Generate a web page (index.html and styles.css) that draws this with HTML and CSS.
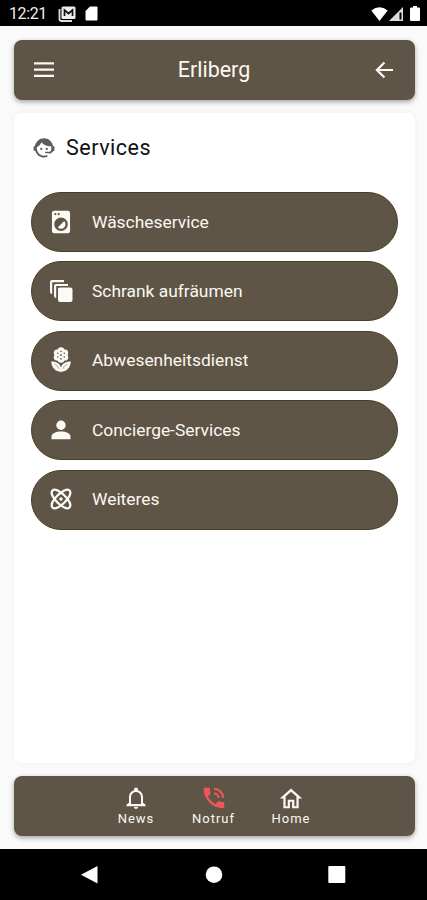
FILE: index.html
```html
<!DOCTYPE html>
<html lang="de">
<head>
<meta charset="utf-8">
<title>Erliberg</title>
<link rel="stylesheet" href="styles.css">
</head>
<body>
<div class="status">
  <span class="clock">12:21</span>
  <svg class="st-mail" viewBox="0 0 18 16"><path d="M1.500 3v10q0 2 2 2H14" fill="none" stroke="#ddd" stroke-width="1.800"/><rect x="3.500" y="0.500" width="14" height="12.500" rx="1.500" fill="#eee"/><path d="M6.500 10V4l4 3.500 4-3.500v6" fill="none" stroke="#111" stroke-width="1.700"/></svg>
  <svg class="st-sd" viewBox="0 0 13 15"><path d="M5 .5h6.500q1 0 1 1v12q0 1-1 1h-10q-1 0-1-1V5z" fill="#fff"/></svg>
  <svg class="st-wifi" viewBox="0 0 17 14"><path d="M.3 3.500Q8.500-3 16.700 3.500L8.500 14z" fill="#fff"/></svg>
  <svg class="st-cell" viewBox="0 0 14 14"><path d="M14 0v14H0z" fill="#ddd"/><path d="M10.500 5.500h2v7h-2z" fill="#000"/></svg>
  <svg class="st-batt" viewBox="0 0 10 15"><path d="M3 0h4v1.500h2q1 0 1 1V14q0 1-1 1H1q-1 0-1-1V2.500q0-1 1-1h2z" fill="#fff"/></svg>
</div>
<main class="app">
  <header class="bar top">
    <svg class="ico menu" viewBox="0 0 24 24"><path d="M2 4.300h20v2.300H2zM2 10.500h20v2.300H2zM2 16.700h20V19H2z"/></svg>
    <h1>Erliberg</h1>
    <svg class="ico back" viewBox="0 0 24 24"><path d="M21 10.900v2.200H7.500l5.700 5.700-1.500 1.500L3.300 12l8.400-8.300 1.500 1.500-5.700 5.700z"/></svg>
  </header>
  <section class="card">
    <h2><svg class="ico face" viewBox="0 0 24 24"><path d="M18.900 14.700C19.200 13.910 19.400 13 19.400 12C19.400 11.280 19.250 10.590 18.960 9.950C18.310 10.100 17.630 10.180 16.920 10.180C13.860 10.180 11.150 8.670 9.500 6.340C8.610 8.500 6.910 10.260 4.770 11.220C4.600 15.800 7.800 19.700 12 19.700C13.050 19.700 14.060 19.400 14.970 19L15.780 20.500C14.140 21.200 12.870 21.500 12 21.500C8 21.500 4.500 18.700 3.330 14.730H1.600V10.180H2.900C3.800 5.600 7.500 2.200 12 2.200C16.600 2.200 20.300 5.700 21.100 10.180H22.400V14.730H21.940L18.600 17.600L13.080 17.100V15.730H18z"/><circle cx="9.270" cy="12.900" r="1.140"/><circle cx="14.720" cy="12.900" r="1.140"/></svg><span>Services</span></h2>
    <nav class="list">
      <a class="item"><svg class="ico wash" viewBox="0 0 24 24"><path d="M14.830 11.170C16.390 12.730 16.390 15.270 14.830 16.830C13.270 18.390 10.730 18.390 9.170 16.830L14.830 11.170M6 2H18A2 2 0 0 1 20 4V20A2 2 0 0 1 18 22H6A2 2 0 0 1 4 20V4A2 2 0 0 1 6 2M7 4A1 1 0 0 0 6 5A1 1 0 0 0 7 6A1 1 0 0 0 8 5A1 1 0 0 0 7 4M10 4A1 1 0 0 0 9 5A1 1 0 0 0 10 6A1 1 0 0 0 11 5A1 1 0 0 0 10 4M12 8A6 6 0 0 0 6 14A6 6 0 0 0 12 20A6 6 0 0 0 18 14A6 6 0 0 0 12 8z"/></svg><span>Wäscheservice</span></a>
      <a class="item"><svg class="ico" viewBox="0 0 24 24"><path d="M11.500 8.500h10a2 2 0 0 1 2 2v10.500a2 2 0 0 1-2 2H11a2 2 0 0 1-2-2V11a2 2 0 0 1 2.500-2.500M7 19a2 2 0 0 1-2-2V7a2 2 0 0 1 2-2h12v2H7.200v12M3 15a2 2 0 0 1-2-2V3a2 2 0 0 1 2-2h12v2.200H3.200v12z"/></svg><span>Schrank aufräumen</span></a>
      <a class="item"><svg class="ico flower" viewBox="0 0 24 26"><circle cx="12" cy="4" r="3.500"/><circle cx="15.800" cy="5.900" r="3.300"/><circle cx="15.800" cy="10.300" r="3.300"/><circle cx="12" cy="12.300" r="3.500"/><circle cx="8.200" cy="10.300" r="3.300"/><circle cx="8.200" cy="5.900" r="3.300"/><g class="cut"><circle cx="12" cy="4.600" r=".8"/><circle cx="15.200" cy="6.400" r=".8"/><circle cx="15.200" cy="10" r=".8"/><circle cx="12" cy="11.900" r=".8"/><circle cx="8.800" cy="10" r=".8"/><circle cx="8.800" cy="6.400" r=".8"/></g><path class="leaf" d="M12 25C6.500 25 2 20.500 2 14C7.500 14 11.200 16.500 12 19.500C12.800 16.500 16.500 14 22 14C22 20.500 17.500 25 12 25z"/><path class="vein" d="M5.500 17q3.500 1.200 4.800 4.800M18.500 17q-3.500 1.200-4.800 4.800"/></svg><span>Abwesenheitsdienst</span></a>
      <a class="item"><svg class="ico" viewBox="0 0 24 24"><circle cx="12" cy="7.300" r="4.700"/><path d="M12 13.500c5.300 0 9.500 2.100 9.500 4.900v2.900h-19v-2.900c0-2.800 4.200-4.900 9.500-4.900z"/></svg><span>Concierge-Services</span></a>
      <a class="item"><svg class="ico" viewBox="0 0 24 24"><g class="orbit"><path d="M3.500 3.500C5.800 1.200 11 4 15.500 8.500S22.800 18.200 20.500 20.500 13 20 8.500 15.500 1.200 5.800 3.500 3.500z"/><path d="M20.500 3.500C18.200 1.200 13 4 8.500 8.500S1.200 18.200 3.500 20.500 11 20 15.500 15.500 22.800 5.800 20.500 3.500z"/></g><circle cx="12" cy="12" r="1.700"/></svg><span>Weiteres</span></a>
    </nav>
  </section>
  <footer class="bar tabs">
    <a class="tab"><svg class="ico" viewBox="0 0 24 24"><path d="M10 21h4c0 1.100-.9 2-2 2s-2-.9-2-2m11.500-2.300v1.600h-19v-1.600l2.500-2v-5.700c0-3.100 2.030-5.830 5-6.710V3.500a2 2 0 0 1 4 0v.79c2.970.88 5 3.610 5 6.710v5.700l2.500 2M17 11a5 5 0 0 0-10 0v7h10v-7z"/></svg><span>News</span></a>
    <a class="tab"><svg class="ico red" viewBox="1.500 1.500 21 21"><path d="M20 15.500c-1.250 0-2.450-.2-3.570-.57-.35-.11-.74-.03-1.020.24l-2.200 2.200a15.100 15.100 0 0 1-6.590-6.590l2.200-2.200c.28-.28.36-.67.250-1.020A11.360 11.360 0 0 1 8.500 4a1 1 0 0 0-1-1H4a1 1 0 0 0-1 1c0 9.390 7.610 17 17 17a1 1 0 0 0 1-1v-3.500a1 1 0 0 0-1-1M19 12h2a9 9 0 0 0-9-9v2a7 7 0 0 1 7 7m-4 0h2a5 5 0 0 0-5-5v2a3 3 0 0 1 3 3z"/></svg><span>Notruf</span></a>
    <a class="tab"><svg class="ico" viewBox="1 0.500 22 22"><path d="M12 5.690l5 4.500V19h-2v-6H9v6H7v-8.810l5-4.500M12 2.700L1.800 12H5v9h6v-6h2v6h6v-9h3.200L12 2.700z"/></svg><span>Home</span></a>
  </footer>
</main>
<div class="sysnav">
  <svg viewBox="0 0 20 20"><path d="M1 9.700L17.500 1v17.500z"/></svg>
  <svg viewBox="0 0 20 20"><circle cx="10" cy="9.700" r="8.300"/></svg>
  <svg viewBox="0 0 20 20"><rect x="1.300" y="1" width="17" height="17" rx="1"/></svg>
</div>
</body>
</html>
```
FILE: styles.css
```css
* { box-sizing: border-box; }
body {
  margin: 0;
  width: 427px;
  height: 900px;
  display: flex;
  flex-direction: column;
  background: #fafafa;
  font-family: Roboto, "Liberation Sans", sans-serif;
  overflow: hidden;
}
svg { display: block; flex: none; }
.status {
  height: 26px;
  background: #000;
  color: #eee;
  display: flex;
  align-items: center;
  padding: 1px 7px 0 9px;
}
.clock { font-size: 16px; width: 49px; letter-spacing: -0.4px; }
.st-mail { width: 18px; height: 16px; }
.st-sd { width: 13px; height: 15px; margin-left: 9px; }
.st-wifi { width: 17px; height: 14px; margin-left: auto; }
.st-cell { width: 14px; height: 14px; margin-left: 1px; }
.st-batt { width: 10px; height: 15px; margin-left: 7px; }
.app {
  height: 823px;
  padding: 14px 12px 13px 14px;
  display: flex;
  flex-direction: column;
}
.bar {
  height: 60px;
  flex: none;
  border-radius: 8px;
  background: #5f5546;
  color: #fbf8f2;
  display: flex;
  align-items: center;
  box-shadow: 0 2px 5px rgba(0, 0, 0, 0.35);
}
.ico { width: 24px; height: 24px; fill: #fcfaf5; }
.top { justify-content: space-between; padding: 0 19px 1px 18px; }
h1 { margin: 0; font-size: 21.5px; font-weight: 400; }
.card {
  flex: 1;
  margin: 13px 0;
  padding: 22px 17px;
  border-radius: 8px;
  background: #fff;
  box-shadow: 0 0 6px rgba(0, 0, 0, 0.05);
}
h2 {
  margin: 0 0 32px;
  height: 25px;
  display: flex;
  align-items: center;
  gap: 10px;
  padding-left: 1px;
  font-size: 21.5px;
  font-weight: 400;
  letter-spacing: 0.5px;
  color: #111;
}
.face { fill: #5c5c5c; }
.list { display: grid; gap: 9.400px; }
.item {
  height: 60px;
  border-radius: 30px;
  border: 1px solid #4a3e20;
  background: #5f5546;
  color: #fbf8f2;
  display: flex;
  align-items: center;
  gap: 19px;
  padding: 0 0 1px 17px;
  font-size: 17.4px;
}
.wash { transform: scale(1.13); }
.flower { transform: scale(1.1); }
.cut { fill: #5f5546; }
.leaf { stroke: #5f5546; stroke-width: 0.8; }
.vein { fill: none; stroke: #a59e92; stroke-width: 0.8; }
.orbit { fill: none; stroke: #fcfaf5; stroke-width: 2.3; }
.tabs { justify-content: center; padding: 0 2px 0 0; }
.tab {
  width: 77.500px;
  display: flex;
  flex-direction: column;
  align-items: center;
  font-size: 13px;
  line-height: 17px;
  letter-spacing: 1px;
}
.sysnav {
  height: 51px;
  background: #000;
  display: flex;
  align-items: center;
  justify-content: space-between;
  padding: 0 80px;
}
.red { fill: #f2545b; }
.sysnav svg { width: 20px; height: 20px; fill: #fff; }
```
